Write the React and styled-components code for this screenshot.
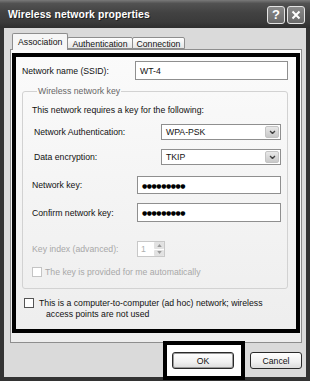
import React from "react";
import styled, { createGlobalStyle } from "styled-components";

const GlobalStyle = createGlobalStyle`
  html, body {
    margin: 0;
    padding: 0;
    overflow: hidden;
    background: #ffffff;
  }
  body {
    font-family: "Liberation Sans", Arial, sans-serif;
    font-size: 8.7px;
    color: #111;
  }
  * { box-sizing: border-box; }
`;

const Window = styled.div`
  width: 310px;
  height: 381px;
  display: flex;
  flex-direction: column;
  overflow: hidden;
`;

const TitleBar = styled.div`
  height: 28px;
  flex: none;
  display: flex;
  align-items: center;
  padding: 0 5px 0 8px;
  background: linear-gradient(#7a7a7a 0%, #525252 12%, #424242 45%, #3a3a3a 80%, #2e2e2e 100%);
`;

const Title = styled.div`
  flex: 1;
  color: #fff;
  font-family: "Liberation Sans", Arial, sans-serif;
  font-weight: bold;
  font-size: 10.4px;
  letter-spacing: 0.1px;
  text-shadow: 1px 1px 0 #222;
`;

const CaptionButtons = styled.div`
  display: flex;
  gap: 2px;
  margin-top: 1px;
`;

const CaptionButton = styled.div`
  width: 18px;
  height: 18px;
  border: 1px solid #e4e4e4;
  border-radius: 3px;
  background: linear-gradient(#8a8a8a, #6a6a6a);
  color: #fff;
  display: flex;
  align-items: center;
  justify-content: center;
  font-weight: bold;
  font-size: 13px;
  font-family: "Liberation Sans", Arial, sans-serif;
`;

const Frame = styled.div`
  flex: 1;
  display: flex;
  flex-direction: column;
  background: #dadada;
  border: 4px solid #333;
  border-top: none;
  padding: 6px 4px 0 6px;
  min-height: 0;
`;

const TabStrip = styled.div`
  display: flex;
  align-items: flex-end;
  height: 15px;
  padding-left: 2px;
  flex: none;
  position: relative;
  z-index: 1;
`;

const Tab = styled.div`
  height: ${(p) => (p.$active ? "17px" : "12px")};
  margin-bottom: ${(p) => (p.$active ? "-1px" : "0")};
  padding: 0 ${(p) => (p.$active ? "5px" : "4px")};
  display: flex;
  align-items: center;
  border: 1px solid #8e8e8e;
  border-bottom: ${(p) => (p.$active ? "none" : "1px solid #8e8e8e")};
  border-radius: 2px 2px 0 0;
  background: ${(p) => (p.$active ? "#f6f6f6" : "linear-gradient(#ffffff, #e6e6e6)")};
  font-size: 8.7px;
  color: #111;
  white-space: nowrap;
  margin-left: ${(p) => (p.$first ? "0" : "-1px")};
  padding-top: ${(p) => (p.$active ? "0" : "1px")};
`;

const TabPage = styled.div`
  flex: none;
  border: 1px solid #8e8e8e;
  background: linear-gradient(#fbfbfb, #ededed);
  padding: 3px 1px 9px 1px;
`;

const Highlight = styled.div`
  border: 4px solid #000;
  padding: 4px 8px 9px 6px;
  display: flex;
  flex-direction: column;
`;

const FieldRow = styled.div`
  display: grid;
  grid-template-columns: ${(p) => p.$cols};
  align-items: center;
  margin-top: ${(p) => p.$mt || 0}px;
  padding-left: ${(p) => p.$pl || 0}px;
`;

const Label = styled.div`
  font-size: 8.7px;
  color: ${(p) => (p.$disabled ? "#a8a8a8" : "#111")};
  white-space: nowrap;
`;

const TextBox = styled.div`
  height: ${(p) => p.$h || 18}px;
  border: 1px solid #8f8f8f;
  background: #fff;
  display: flex;
  align-items: center;
  padding-left: 4px;
  font-size: 8.7px;
`;

const Dots = styled.span`
  font-family: "DejaVu Sans", sans-serif;
  font-size: 6px;
  letter-spacing: -0.45px;
  color: #000;
`;

const Select = styled.div`
  height: 16px;
  border: 1px solid #8f8f8f;
  background: #fff;
  display: flex;
  align-items: center;
  justify-content: space-between;
  padding: 1px 1px 1px 4px;
  font-size: 8.7px;
`;

const DropButton = styled.div`
  width: 14px;
  height: 12px;
  border: 1px solid #c4c4c4;
  border-radius: 2px;
  background: linear-gradient(#e8e8e8, #c9c9c9);
  display: flex;
  align-items: center;
  justify-content: center;
`;

const Group = styled.fieldset`
  margin: 5px 0 0 0;
  border: 1px solid #d2d2d2;
  border-radius: 3px;
  padding: 8px 6px 10px 9px;
  min-width: 0;
`;

const Legend = styled.legend`
  font-size: 8.7px;
  line-height: 12px;
  color: #666;
  padding: 0 1px;
  margin-left: 5px;
`;

const Spinner = styled.div`
  display: flex;
  width: 28px;
  height: 16px;
  border: 1px solid #c8c8c8;
  background: #fff;
`;

const SpinValue = styled.div`
  flex: 1;
  color: #b0b0b0;
  font-size: 8.7px;
  padding-left: 3px;
  display: flex;
  align-items: center;
`;

const SpinArrows = styled.div`
  width: 10px;
  display: flex;
  flex-direction: column;
  gap: 1px;
`;

const SpinArrow = styled.div`
  flex: 1;
  background: #e2e2e2;
  border-radius: 1px;
  display: flex;
  align-items: center;
  justify-content: center;
`;

const CheckRow = styled.div`
  display: flex;
  align-items: flex-start;
  gap: ${(p) => p.$gap || 4}px;
  margin-top: ${(p) => p.$mt || 0}px;
  padding-left: ${(p) => p.$pl || 0}px;
`;

const CheckBox = styled.div`
  width: 10px;
  height: 10px;
  flex: none;
  border: 1px solid ${(p) => (p.$disabled ? "#c4c4c4" : "#555")};
  background: #fff;
`;

const CheckText = styled.div`
  font-size: 8.7px;
  line-height: 11px;
  color: ${(p) => (p.$disabled ? "#a8a8a8" : "#111")};
`;

const Line = styled.div`
  padding-left: ${(p) => p.$indent || 0}px;
  white-space: nowrap;
`;

const ButtonRow = styled.div`
  display: flex;
  justify-content: flex-end;
  align-items: flex-start;
  gap: 5px;
  margin-top: -2px;
  flex: none;
  position: relative;
  z-index: 2;
`;

const OkFrame = styled.div`
  border: 4px solid #000;
  background: #fff;
  padding: 7px 7px 7px 5px;
`;

const Button = styled.div`
  width: ${(p) => p.$w}px;
  height: 17px;
  margin-top: ${(p) => p.$mt || 0}px;
  border: 1px solid #2a2a2a;
  border-radius: 3px;
  background: linear-gradient(#ffffff, #f0f0f0 60%, #dcdcdc);
  display: flex;
  align-items: center;
  justify-content: center;
  font-size: 8.7px;
  color: #111;
  box-shadow: ${(p) => (p.$default ? "inset 0 0 0 1px #9a9a9a" : "none")};
`;

const Chevron = ({ size = 7, color = "#444" }) => (
  <svg width={size} height={size * 0.7} viewBox="0 0 10 7">
    <polyline points="1.5,1.5 5,5 8.5,1.5" fill="none" stroke={color} strokeWidth="2" />
  </svg>
);

const Arrow = ({ up }) => (
  <svg width="5" height="3" viewBox="0 0 6 4">
    <polygon points={up ? "0,4 3,0 6,4" : "0,0 3,4 6,0"} fill="#9a9a9a" />
  </svg>
);

export default function App() {
  return (
    <>
      <GlobalStyle />
      <Window>
        <TitleBar>
          <Title>Wireless network properties</Title>
          <CaptionButtons>
            <CaptionButton>?</CaptionButton>
            <CaptionButton>
              <svg width="10" height="10" viewBox="0 0 10 10">
                <path d="M1.5 1.5 L8.5 8.5 M8.5 1.5 L1.5 8.5" stroke="#fff" strokeWidth="2" />
              </svg>
            </CaptionButton>
          </CaptionButtons>
        </TitleBar>
        <Frame>
          <TabStrip>
            <Tab $active $first>Association</Tab>
            <Tab>Authentication</Tab>
            <Tab>Connection</Tab>
          </TabStrip>
          <TabPage>
            <Highlight>
              <FieldRow $cols="113px 153px">
                <Label>Network name (SSID):</Label>
                <TextBox $h={19}>WT-4</TextBox>
              </FieldRow>
              <Group>
                <Legend>Wireless network key</Legend>
                <Label>This network requires a key for the following:</Label>
                <FieldRow $cols="127px 120px" $pl={2} $mt={9}>
                  <Label>Network Authentication:</Label>
                  <Select>
                    WPA-PSK
                    <DropButton><Chevron /></DropButton>
                  </Select>
                </FieldRow>
                <FieldRow $cols="127px 120px" $pl={2} $mt={9}>
                  <Label>Data encryption:</Label>
                  <Select>
                    TKIP
                    <DropButton><Chevron /></DropButton>
                  </Select>
                </FieldRow>
                <FieldRow $cols="105px 144px" $mt={11}>
                  <Label>Network key:</Label>
                  <TextBox><Dots>●●●●●●●●●</Dots></TextBox>
                </FieldRow>
                <FieldRow $cols="105px 144px" $mt={9}>
                  <Label>Confirm network key:</Label>
                  <TextBox $h={19}><Dots>●●●●●●●●●</Dots></TextBox>
                </FieldRow>
                <FieldRow $cols="105px 28px" $mt={19}>
                  <Label $disabled>Key index (advanced):</Label>
                  <Spinner>
                    <SpinValue>1</SpinValue>
                    <SpinArrows>
                      <SpinArrow><Arrow up /></SpinArrow>
                      <SpinArrow><Arrow /></SpinArrow>
                    </SpinArrows>
                  </Spinner>
                </FieldRow>
                <CheckRow $mt={10} $gap={3}>
                  <CheckBox $disabled />
                  <CheckText $disabled>The key is provided for me automatically</CheckText>
                </CheckRow>
              </Group>
              <CheckRow $mt={9} $pl={2} $gap={5}>
                <CheckBox />
                <CheckText>
                  <Line>This is a computer-to-computer (ad hoc) network; wireless</Line>
                  <Line $indent={7}>access points are not used</Line>
                </CheckText>
              </CheckRow>
            </Highlight>
          </TabPage>
          <ButtonRow>
            <OkFrame>
              <Button $w={62} $default>OK</Button>
            </OkFrame>
            <Button $w={52} $mt={11}>Cancel</Button>
          </ButtonRow>
        </Frame>
      </Window>
    </>
  );
}
